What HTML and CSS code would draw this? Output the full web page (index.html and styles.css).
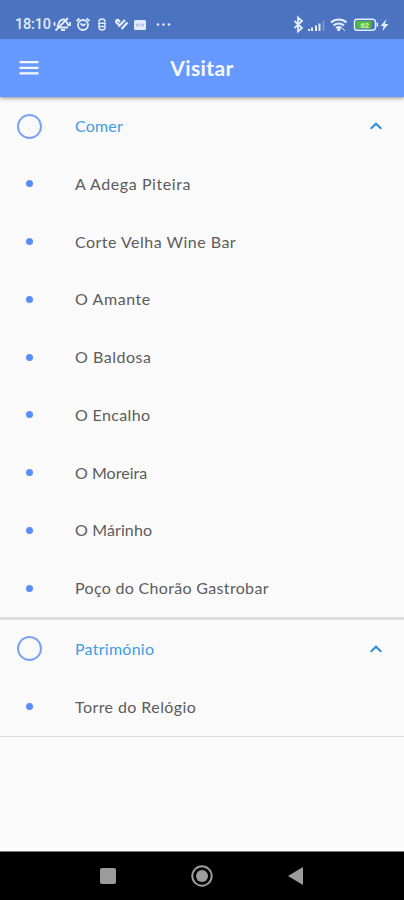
FILE: index.html
```
<!DOCTYPE html>
<html lang="pt">
<head>
<meta charset="utf-8">
<meta name="viewport" content="width=device-width, initial-scale=1">
<title>Visitar</title>
<link rel="stylesheet" href="styles.css">
</head>
<body>
<div class="screen">
  <div class="status">
    <span class="clock">18:10</span>
    <svg class="status-icons" width="124" height="20" viewBox="0 0 124 20" fill="none" stroke="#e3ecfb" stroke-width="1.500">
      <path d="M5 13c2-2 1-4 3-6s5-2 6 0 2 4 3 5M5 13.500h11M9 16h4M3.500 16.500 16 4M2.500 8v4M18 8v4" stroke-width="1.800"/>
      <circle cx="31" cy="11" r="5" stroke-width="1.800"/><path d="M24.500 7 27.500 4.500M34.500 4.500 37.500 7M28.500 9.500l2.500 2 2.500-1.500" stroke-width="1.800"/>
      <path d="M47 8c0-4 6-4 6 0M46 9.200h8M47 9v4c0 4 6 4 6 0V9M48 12.500h4" stroke-width="1.500"/>
      <path d="M67 11 64.200 8.200q-.5-2.200 1.800-2.200l2 2M66.500 12.500l6.500-6.500M69.500 15l6-6.500" stroke-width="2.300"/>
      <rect x="82" y="6" width="12" height="10" rx="1.500" fill="#e3ecfb" stroke="none"/><path d="M84.500 10h2.500v2h-2.500zM89 10h2.500v2h-2.500z" stroke="#9bb3df" stroke-width=".8"/>
      <g fill="#e3ecfb" stroke="none"><circle cx="106" cy="10.500" r="1.300"/><circle cx="111.500" cy="10.500" r="1.300"/><circle cx="117" cy="10.500" r="1.300"/></g>
    </svg>
    <svg class="system-icons" width="100" height="20" viewBox="0 0 100 20" fill="none" stroke="#e3ecfb" stroke-width="1.500">
      <path d="m2.500 7 7.500 7-4 3.500v-14L10 7l-7.500 7" stroke-width="1.800"/>
      <path d="M17 17v-2M20 17v-3.500M24 17v-5.500M27.500 17V9.500" stroke-width="2"/><path d="M31.500 17V6.500" stroke="#829fd7"/>
      <path d="M39 8.500c4.500-4 11-4 15.500 0M41.500 11.500c3-2.700 7.500-2.700 10.500 0M44 14c2-1.500 3.500-1.500 5.500 0" stroke-width="2.100"/><circle cx="46.700" cy="15.500" r="1.700" fill="#e3ecfb" stroke="none"/><path d="m50 14 3 3" stroke-width="1"/>
      <path d="M65 5.200h15q3.500 0 3.500 3v5q0 3-3.500 3H65q-2.500 0-2.500-2.500V7.700q0-2.500 2.500-2.500Z"/><path d="M85.300 8.700v4"/><rect x="64.200" y="7" width="15" height="7.500" rx="1" fill="#50bd3b" stroke="none"/>
      <text x="68.500" y="13.500" class="charge">62</text>
      <path d="m94.500 5-6 7h3l-1 5 6-7h-3.500z" fill="#e3ecfb" stroke="none"/>
    </svg>
  </div>
  <header class="bar">
    <svg class="menu" width="20" height="16" viewBox="0 0 20 16"><path d="M.5 2.200h19M.5 7.800h19M.5 13.300h19" stroke="#f4f7ff" stroke-width="2.200"/></svg>
    <h1 class="title">Visitar</h1>
  </header>
  <main class="content">
    <section class="group">
      <div class="row head"><span class="mark"><i class="ring"></i></span><span class="label comer">Comer</span><svg class="chevron" width="14" height="10" viewBox="0 0 14 10"><path d="m1.700 7.700 5.300-5 5.300 5"/></svg></div>
      <div class="row"><span class="mark"><i class="dot"></i></span><span class="label adega">A Adega Piteira</span></div>
      <div class="row"><span class="mark"><i class="dot"></i></span><span class="label corte">Corte Velha Wine Bar</span></div>
      <div class="row"><span class="mark"><i class="dot"></i></span><span class="label amante">O Amante</span></div>
      <div class="row"><span class="mark"><i class="dot"></i></span><span class="label baldosa">O Baldosa</span></div>
      <div class="row"><span class="mark"><i class="dot"></i></span><span class="label encalho">O Encalho</span></div>
      <div class="row"><span class="mark"><i class="dot"></i></span><span class="label moreira">O Moreira</span></div>
      <div class="row"><span class="mark"><i class="dot"></i></span><span class="label marinho">O Márinho</span></div>
      <div class="row"><span class="mark"><i class="dot"></i></span><span class="label poco">Poço do Chorão Gastrobar</span></div>
    </section>
    <section class="group last">
      <div class="row head"><span class="mark"><i class="ring"></i></span><span class="label patrimonio">Património</span><svg class="chevron" width="14" height="10" viewBox="0 0 14 10"><path d="m1.700 7.700 5.300-5 5.300 5"/></svg></div>
      <div class="row"><span class="mark"><i class="dot"></i></span><span class="label torre">Torre do Relógio</span></div>
    </section>
  </main>
  <nav class="nav">
    <svg width="24" height="24" viewBox="0 0 24 24"><rect x="4" y="4" width="16" height="16" rx="2" fill="#9c9c9c"/></svg>
    <svg width="24" height="24" viewBox="0 0 24 24"><circle cx="12" cy="12" r="9.700" fill="none" stroke="#9c9c9c" stroke-width="2"/><circle cx="12" cy="12" r="6" fill="#9c9c9c"/></svg>
    <svg width="24" height="24" viewBox="0 0 24 24"><path d="M19 3v18L4 12z" fill="#9c9c9c"/></svg>
  </nav>
</div>
</body>
</html>
```
FILE: styles.css
```
* { box-sizing: border-box; }
body { margin: 0; font-family: Lato, "Open Sans", sans-serif; background: #fafafa; }
.screen { width: 404px; height: 900px; display: flex; flex-direction: column; overflow: hidden; }
.status { height: 39px; flex: none; background: #4b73c0; display: flex; align-items: flex-start; padding: 14px 12px 0 15px; color: #e3ecfb; z-index: 2; }
.clock { width: 37px; font: 500 14.5px/22px Roboto, sans-serif; letter-spacing: -.2px; white-space: nowrap; }
.status-icons { flex: none; }
.system-icons { margin-left: auto; flex: none; }
.charge { font: 700 7.5px Roboto, sans-serif; fill: #d8f4d4; stroke: none; }
.bar { height: 58px; flex: none; background: #6699ff; display: grid; grid-template-columns: 60px 1fr 60px; align-items: center; box-shadow: 0 1px 4px rgba(0,0,0,.45); z-index: 1; }
.menu { margin-left: 19px; }
.title { margin: 0 0 1px; text-align: center; color: #f8faff; font-size: 21px; line-height: 28px; font-weight: 700; letter-spacing: .4px; }
.content { flex: 1; padding-top: .25px; border-bottom: 3px solid #fff; }
.group { border-bottom: 3px solid #dedede; }
.group.last { border-bottom: 1px solid #dedede; }
.row { height: 57.75px; display: flex; align-items: center; padding: 0 21px 0 16px; }
.mark { width: 26px; margin-right: 33px; display: flex; justify-content: center; }
.ring { width: 25px; height: 25px; border: 2px solid #7da1f6; border-radius: 50%; }
.dot { width: 7px; height: 7px; border-radius: 50%; background: #588ff7; }
.label { font-size: 16px; line-height: 24px; color: #5c5c5c; white-space: nowrap; }
.comer { letter-spacing: .2px; }
.adega { letter-spacing: .58px; }
.corte { letter-spacing: .48px; }
.amante { letter-spacing: .58px; }
.baldosa { letter-spacing: .53px; }
.encalho { letter-spacing: .36px; }
.moreira { letter-spacing: .02px; }
.marinho { letter-spacing: .12px; }
.poco { letter-spacing: .32px; }
.patrimonio { letter-spacing: .26px; }
.torre { letter-spacing: .42px; }
.head .label { color: #419ce3; }
.chevron { margin-left: auto; fill: none; stroke: #2d8fdc; stroke-width: 2; }
.nav { height: 49px; flex: none; background: #000; border-top: 1px solid #777; display: flex; justify-content: center; gap: 70px; align-items: center; }
```
